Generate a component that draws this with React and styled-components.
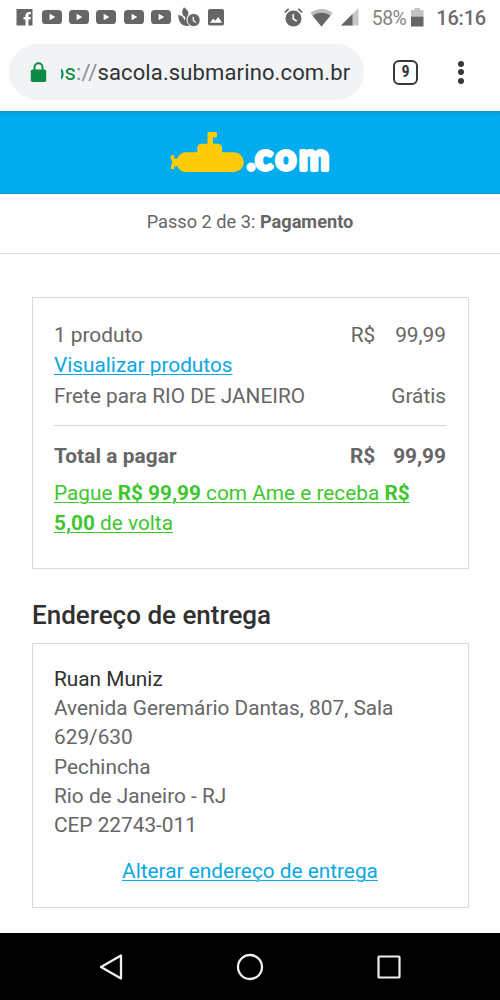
import React from 'react';
import styled, { createGlobalStyle } from 'styled-components';

const GlobalStyle = createGlobalStyle`
  * { box-sizing: border-box; }
  body { margin: 0; background: #fefefe; font-family: Roboto, "Liberation Sans", sans-serif; }
  svg { display: block; flex: none; }
`;

const Screen = styled.div`
  width: 500px;
  height: 1000px;
  overflow: hidden;
  display: flex;
  flex-direction: column;
  background: #fefefe;
  color: #666;
`;

const StatusBar = styled.div`
  height: 34px;
  display: flex;
  align-items: center;
  justify-content: space-between;
  padding: 0 14px 0 16px;
  color: #666;
`;

const Notifications = styled.div`
  display: flex;
  align-items: center;
  gap: 7.3px;
`;

const SystemInfo = styled.div`
  display: flex;
  align-items: center;
`;

const Battery = styled.span`
  display: flex;
  align-items: center;
  gap: 5px;
  margin: 0 12px 0 13px;
  font-size: 19.4px;
  letter-spacing: -0.5px;
  line-height: 32px;
  color: #858585;
`;

const BatteryLevel = styled.span`
  padding-top: 3px;
`;

const Clock = styled.span`
  padding-top: 2px;
  font-size: 20px;
  letter-spacing: -0.2px;
  line-height: 32px;
  color: #6c6c6c;
  font-weight: 500;
`;

const BrowserBar = styled.div`
  height: 77px;
  display: flex;
  align-items: center;
  padding: 0 28px 0 9px;
`;

const AddressPill = styled.div`
  width: 355px;
  height: 56px;
  margin-top: -1px;
  border-radius: 28px;
  background: #f1f3f4;
  display: flex;
  align-items: center;
  padding-left: 21px;
`;

const UrlClip = styled.div`
  flex: 1;
  margin-left: 14px;
  overflow: hidden;
  display: flex;
  white-space: nowrap;
  font-size: 22px;
  letter-spacing: 0.13px;
  line-height: 34px;
  padding-top: 2px;
  color: #303236;
`;

const Scheme = styled.span`
  margin-left: -9px;
  color: #0d8a43;
`;

const Slashes = styled.span`
  color: #8a8d91;
`;

const TabCount = styled.div`
  width: 25px;
  height: 25px;
  margin: -1px 0 0 29px;
  border: 2.5px solid #35373b;
  border-radius: 6px;
  display: flex;
  align-items: center;
  justify-content: center;
  font: 700 16px/20px "Roboto Condensed", Roboto, sans-serif;
  color: #35373b;
`;

const MenuDots = styled.div`
  width: 6px;
  margin-left: auto;
  margin-top: -1px;
  margin-right: 8px;
  display: grid;
  gap: 2.5px;
`;

const Dot = styled.i`
  width: 6px;
  height: 6px;
  border-radius: 50%;
  background: #35373b;
`;

const BrandHeader = styled.header`
  height: 83px;
  background: linear-gradient(#0798d2 0, #03a6e8 3px, #00acee 7px);
  border-bottom: 1px solid #0797cd;
  display: flex;
  justify-content: center;
  padding-top: 18px;
`;

const StepBar = styled.div`
  height: 60px;
  border-bottom: 1.5px solid #dcdcdc;
  text-align: center;
  font-size: 18.2px;
  line-height: 55px;
`;

const Content = styled.main`
  flex: 1;
  padding: 43px 31px 0 32px;
`;

const Card = styled.section`
  height: ${(p) => p.$height}px;
  border: 1px solid #dadada;
  padding: ${(p) => p.$top}px 22px 0 21px;
  font-size: 20.8px;
  line-height: ${(p) => p.$leading}px;
`;

const Row = styled.div`
  display: flex;
  justify-content: space-between;
  font-weight: ${(p) => (p.$strong ? 700 : 400)};
`;

const TotalLabel = styled.span`
  letter-spacing: 0.1px;
`;

const Money = styled.span`
  display: flex;
  gap: ${(p) => p.$gap}px;
`;

const Link = styled.a`
  color: #0aa8e2;
  text-decoration: underline;
  text-decoration-thickness: 1.3px;
  text-underline-offset: 2px;
`;

const Rule = styled.hr`
  height: 1px;
  border: 0;
  margin: 14px 0 14.6px;
  background: #dadada;
`;

const Promo = styled.p`
  margin: 7px -8px 0 0;
  color: #3fc62f;
  text-decoration: underline;
  text-decoration-thickness: 1.3px;
  text-underline-offset: 2px;
`;

const Heading = styled.h2`
  margin: 26px 0 8px;
  font-size: 26px;
  line-height: 40px;
  font-weight: 500;
  color: #303030;
`;

const Recipient = styled.div`
  color: #303030;
`;

const CenteredAction = styled.div`
  margin-top: 17px;
  text-align: center;
`;

const NavBar = styled.nav`
  height: 67px;
  background: #000;
  display: flex;
  align-items: center;
  justify-content: space-between;
  padding: 0 98px;
`;

const FacebookIcon = () => (
  <svg width="18.500" height="17" viewBox="0 0 18.500 17">
    <path fill="#666" d="M.5 0h16v16.500h-4v-6h2.100l.3-2.600h-2.400V6.400c0-.8.3-1.200 1.200-1.200H15V2.900h-2c-2.400 0-3.500 1.400-3.500 3.400v1.600h-2v2.600h2v6h-9z" />
  </svg>
);

const VideoIcon = () => (
  <svg width="20" height="14" viewBox="0 0 20 14">
    <rect width="20" height="14" rx="3.600" fill="#666" />
    <path d="M7.600 3.800v6.400L13.300 7z" fill="#fff" />
  </svg>
);

const FlameClockIcon = () => (
  <svg width="22" height="20" viewBox="0 0 22 20">
    <path fill="#666" d="M6 .3c2.900 2.300 5.100 4.300 4.300 7L7.600 10.200 4.900 8.200C3.600 5.600 4.300 2.600 6 .3zM.2 8c3.300.2 5.600 2.200 6.500 5.500.2-3 1.500-4.700 3.700-5.700-1.700 2.600-2 5.600-.8 8.200l2.200 2.600C6 20.400.2 16.600.2 8z" />
    <circle cx="15.600" cy="13" r="6.600" fill="#666" stroke="#fefefe" />
    <path d="M15.300 9.700v3.700l2.600 2" fill="none" stroke="#fff" strokeWidth="1.300" />
  </svg>
);

const ImageIcon = () => (
  <svg width="16" height="17" viewBox="0 0 16 17">
    <rect width="16" height="16.500" rx="1.800" fill="#666" />
    <path d="M2 13.700l3.200-4.200 2 2.300L10.300 8l3.800 5.700z" fill="#fff" />
  </svg>
);

const AlarmIcon = () => (
  <svg width="19" height="19" viewBox="0 0 19 19">
    <circle cx="9.500" cy="10.500" r="8" fill="#666" />
    <path d="M.7 4.400 4.700 1M18.300 4.400 14.300 1" stroke="#666" strokeWidth="1.700" />
    <path d="M9.200 6v5l3.600 2" fill="none" stroke="#fff" strokeWidth="1.500" />
  </svg>
);

const WifiIcon = () => (
  <svg width="23" height="19" viewBox="0 0 23 19">
    <path d="M.4 5C6.800-.2 16.200-.2 22.600 5L11.500 18.500z" fill="#bdbdbd" />
    <path d="M2.600 7.700c5.200-3.900 12.600-3.900 17.800 0l-8.900 10.800z" fill="#666" />
  </svg>
);

const SignalIcon = () => (
  <svg width="18" height="18" viewBox="0 0 18 18">
    <path d="M0 17.500 17.500 0v17.500z" fill="#c7c7c7" />
    <path d="M0 17.500 11.500 6v11.500z" fill="#666" />
  </svg>
);

const BatteryIcon = () => (
  <svg width="13" height="19" viewBox="0 0 13 19">
    <path d="M0 2h3.500V0h5.500v2h3.500v7H0z" fill="#c2c2c2" />
    <path d="M0 8.700h12.500V18.500H0z" fill="#666" />
  </svg>
);

const LockIcon = () => (
  <svg width="17" height="21" viewBox="0 0 17 21">
    <rect x=".8" y="7.500" width="15.400" height="12.500" rx="1.700" fill="#0d8a43" />
    <path d="M4.500 9V5.200a4 4 0 0 1 8 0V9" fill="none" stroke="#0d8a43" strokeWidth="1.900" />
  </svg>
);

const Logo = () => (
  <svg width="162" height="50" viewBox="169 129 162 50">
    <path
      fill="#ffcb08"
      d="M207.500 133.500q0-1.500 1.500-1.500h6.500q1.500 0 1.500 1.500v2.500q0 1.500-1.500 1.500H213v6.300h4.500q4.500 0 4.500 4.500v4h12a9.850 9.850 0 0 1 0 19.700H186c-4.300 0-7.600-2.600-9.300-6.200l-2.500 1.200c.2 1.300.2 2.400-.3 2.600l-2.800-.8c-1-.5.300-3.100 1-5.600v-2c-1.300-2.100-2.300-4.600-1.500-5.200l2.800-1.300c.8 0 .8 1.500.8 3.100l2.400 1.500c1.800-4 5.200-7 9.400-7h11.300v-4q0-4.500 4.500-4.500h5.700z"
    />
    <text
      x="246.700 255.300 275.600 298.900"
      y="170"
      fill="#fff"
      stroke="#fff"
      strokeWidth="3.800"
      strokeLinejoin="round"
      fontFamily="Lato, Roboto, sans-serif"
      fontWeight="700"
      fontSize="36"
    >
      .com
    </text>
  </svg>
);

const BackIcon = () => (
  <svg width="27" height="28" viewBox="0 0 27 28">
    <path d="M3 14 23 2.500v23z" fill="none" stroke="#eee" strokeWidth="2.300" strokeLinejoin="round" />
  </svg>
);

const HomeIcon = () => (
  <svg width="28" height="28" viewBox="0 0 28 28">
    <circle cx="14" cy="14" r="12" fill="none" stroke="#eee" strokeWidth="2.300" />
  </svg>
);

const RecentsIcon = () => (
  <svg width="27" height="28" viewBox="0 0 27 28">
    <rect x="3.500" y="3.500" width="21" height="21" rx=".8" fill="none" stroke="#eee" strokeWidth="2.200" />
  </svg>
);

export default function App() {
  return (
    <Screen>
      <GlobalStyle />
      <StatusBar>
        <Notifications>
          <FacebookIcon />
          {[0, 1, 2, 3, 4].map((n) => <VideoIcon key={n} />)}
          <FlameClockIcon />
          <ImageIcon />
        </Notifications>
        <SystemInfo>
          <Notifications><AlarmIcon /><WifiIcon /><SignalIcon /></Notifications>
          <Battery><BatteryLevel>58%</BatteryLevel><BatteryIcon /></Battery>
          <Clock>16:16</Clock>
        </SystemInfo>
      </StatusBar>
      <BrowserBar>
        <AddressPill>
          <LockIcon />
          <UrlClip><Scheme>ps</Scheme><Slashes>://</Slashes>sacola.submarino.com.br</UrlClip>
        </AddressPill>
        <TabCount>9</TabCount>
        <MenuDots><Dot /><Dot /><Dot /></MenuDots>
      </BrowserBar>
      <BrandHeader><Logo /></BrandHeader>
      <StepBar>Passo 2 de 3: <b>Pagamento</b></StepBar>
      <Content>
        <Card $height={272} $top={21.8} $leading={30.4}>
          <Row><span>1 produto</span><Money $gap={20}><span>R$</span><span>99,99</span></Money></Row>
          <Row><Link>Visualizar produtos</Link></Row>
          <Row><span>Frete para RIO DE JANEIRO</span><span>Grátis</span></Row>
          <Rule />
          <Row $strong><TotalLabel>Total a pagar</TotalLabel><Money $gap={18}><span>R$</span><span>99,99</span></Money></Row>
          <Promo>Pague <b>R$ 99,99</b> com Ame e receba <b>R$ 5,00</b> de volta</Promo>
        </Card>
        <Heading>Endereço de entrega</Heading>
        <Card $height={265} $top={21} $leading={29.2}>
          <Recipient>Ruan Muniz</Recipient>
          <div>Avenida Geremário Dantas, 807, Sala 629/630</div>
          <div>Pechincha</div>
          <div>Rio de Janeiro - RJ</div>
          <div>CEP 22743-011</div>
          <CenteredAction><Link>Alterar endereço de entrega</Link></CenteredAction>
        </Card>
      </Content>
      <NavBar><BackIcon /><HomeIcon /><RecentsIcon /></NavBar>
    </Screen>
  );
}
